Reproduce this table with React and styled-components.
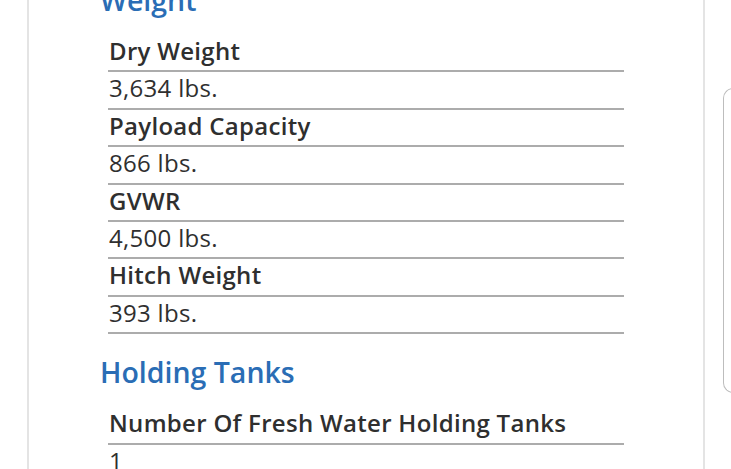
import React from "react";
import styled, { createGlobalStyle } from "styled-components";

const GlobalStyle = createGlobalStyle`
  html, body {
    margin: 0;
    padding: 0;
    background: #ffffff;
    overflow: hidden;
  }
  body {
    font-family: "Open Sans", "Noto Sans", sans-serif;
  }
`;

const Page = styled.div`
  display: flex;
  flex-direction: row;
  align-items: flex-start;
  width: 731px;
  height: 469px;
  padding-left: 27px;
  box-sizing: border-box;
  overflow: hidden;
`;

const Card = styled.div`
  flex: 0 0 678px;
  height: 469px;
  box-sizing: border-box;
  border-left: 2px solid #e4e4e4;
  border-right: 2px solid #e4e4e4;
  padding-left: 71px;
  overflow: hidden;
`;

const Scroller = styled.div`
  margin-top: -18px;
  display: flex;
  flex-direction: column;
  gap: 20px;
`;

const Section = styled.section`
  display: flex;
  flex-direction: column;
`;

const Heading = styled.h3`
  margin: 0 0 17px 0;
  font-size: 28.5px;
  line-height: 36px;
  font-weight: 600;
  color: #2a6db5;
`;

const SpecList = styled.div`
  display: flex;
  flex-direction: column;
  margin-left: 8px;
  width: 516px;
`;

const SpecRow = styled.div`
  line-height: 32.4px;
  padding-bottom: 3px;
  font-size: 24px;
  letter-spacing: 0.3px;
  color: #2f2f2f;
  font-weight: ${(props) => (props.label ? 600 : 400)};
  border-bottom: 2px solid #acacac;
  padding-left: 1px;
  white-space: nowrap;
`;

const SideBox = styled.div`
  flex: 0 0 40px;
  margin-left: 18px;
  margin-top: 88px;
  height: 305px;
  box-sizing: border-box;
  border: 1.5px solid #bdbdbd;
  border-right: none;
  border-radius: 10px 0 0 10px;
`;

const sections = [
  {
    title: "Weight",
    specs: [
      ["Dry Weight", "3,634 lbs."],
      ["Payload Capacity", "866 lbs."],
      ["GVWR", "4,500 lbs."],
      ["Hitch Weight", "393 lbs."],
    ],
  },
  {
    title: "Holding Tanks",
    specs: [["Number Of Fresh Water Holding Tanks", "1"]],
  },
];

export default function App() {
  return (
    <>
      <GlobalStyle />
      <Page>
        <Card>
          <Scroller>
            {sections.map((section) => (
              <Section key={section.title}>
                <Heading>{section.title}</Heading>
                <SpecList>
                  {section.specs.map(([label, value]) => (
                    <React.Fragment key={label}>
                      <SpecRow label>{label}</SpecRow>
                      <SpecRow>{value}</SpecRow>
                    </React.Fragment>
                  ))}
                </SpecList>
              </Section>
            ))}
          </Scroller>
        </Card>
        <SideBox />
      </Page>
    </>
  );
}
